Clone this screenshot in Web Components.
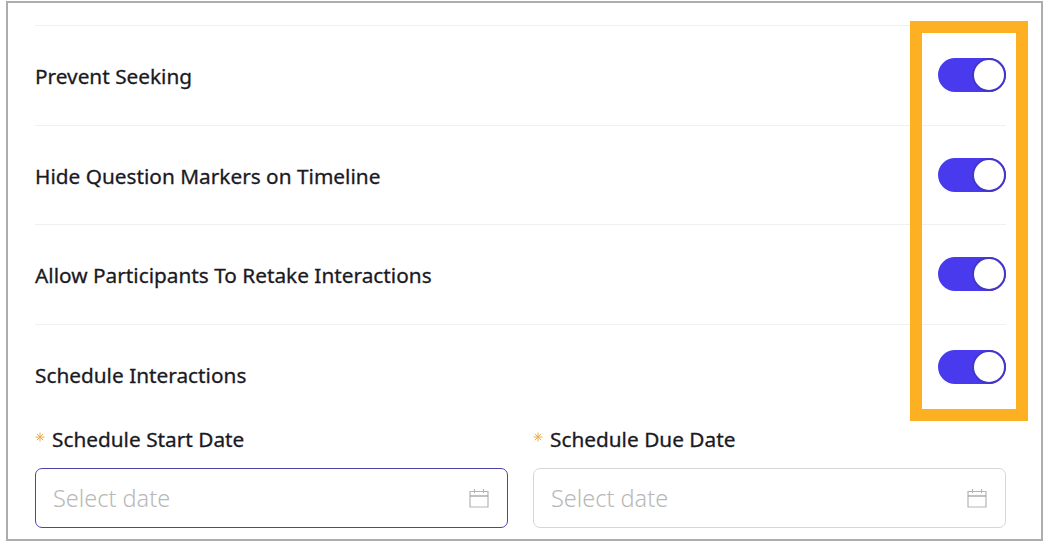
<!DOCTYPE html>
<html><head><meta charset="utf-8"><style>
html,body{margin:0;padding:0;background:#fff}
body{width:1047px;height:541px;overflow:hidden;font-family:"Noto Sans","Open Sans",sans-serif}
</style></head><body>
<settings-panel>
<setting-row label="Prevent Seeking"></setting-row>
<setting-row label="Hide Question Markers on Timeline"></setting-row>
<setting-row label="Allow Participants To Retake Interactions"></setting-row>
<setting-row label="Schedule Interactions" last></setting-row>
<date-grid>
<date-field label="Schedule Start Date" focused></date-field>
<date-field label="Schedule Due Date"></date-field>
</date-grid>
</settings-panel>
<script>
function shadow(el, html) {
  const root = el.attachShadow({ mode: 'open' });
  root.innerHTML = html;
  return root;
}
class SettingsPanel extends HTMLElement {
  constructor() {
    super();
    shadow(this, `<style>
:host{display:block;box-sizing:border-box;position:relative;margin:1px 0 0 6px;width:1037px;height:540px;border:2px solid #adadad;padding:22px 35px 0 27px;background:#fff;overflow:hidden}
.hl{position:absolute;left:902px;top:18px;width:118px;height:400px;box-sizing:border-box;border:12px solid #fdb022}
</style><slot></slot><div class="hl"></div>`);
  }
}
class ToggleSwitch extends HTMLElement {
  constructor() {
    super();
    shadow(this, `<style>
:host{display:flex;flex:none;justify-content:flex-end;align-items:center;box-sizing:border-box;width:68px;height:34px;border-radius:17px;background:#4a3aee;padding:2px}
i{display:block;width:30px;height:30px;border-radius:50%;background:#fff;box-shadow:0 0 0 2px #4436c8}
</style><i></i>`);
  }
}
class SettingRow extends HTMLElement {
  constructor() {
    super();
    const last = this.hasAttribute('last');
    shadow(this, `<style>
:host{display:flex;box-sizing:border-box;justify-content:space-between;border-top:1px solid #f0f0f0;height:${last ? 94 : 99.5}px;padding-top:${last ? 25 : 32}px;align-items:flex-start;font-size:20.8px;font-weight:450;color:#1a1a1f;-webkit-text-stroke:.3px #1a1a1f}
span{display:block;line-height:28px;margin-top:${last ? 11 : 4}px}
</style><span>${this.getAttribute('label')}</span><toggle-switch></toggle-switch>`);
  }
}
class DateGrid extends HTMLElement {
  constructor() {
    super();
    shadow(this, `<style>
:host{display:grid;grid-template-columns:473px 473px;column-gap:25px;padding-top:6px}
</style><slot></slot>`);
  }
}
class DateField extends HTMLElement {
  constructor() {
    super();
    const focused = this.hasAttribute('focused');
    shadow(this, `<style>
:host{display:block}
.lab{display:flex;align-items:center;height:30px;font-size:20.8px;font-weight:450;color:#1a1a1f;white-space:nowrap;-webkit-text-stroke:.3px #1a1a1f}
.star{flex:none;display:block;margin:0 7px 4px 0}
.box{display:flex;align-items:center;justify-content:space-between;box-sizing:border-box;height:60px;margin-top:14px;padding:0 18px 0 17px;border:1px solid ${focused ? '#4d44a8' : '#d6d6d6'};border-radius:7px;background:#fff}
.ph{font-size:23.5px;font-weight:300;color:#b8b8b8}
.cal{flex:none;display:block}
</style><div class="lab"><svg class="star" width="10" height="10" viewBox="0 0 10 10" stroke="#e9ad4c" stroke-width="1" fill="none"><path d="M5 .5v9M.5 5h9M1.8 1.8l6.4 6.4M8.2 1.8L1.8 8.2"/></svg>${this.getAttribute('label')}</div>
<div class="box"><span class="ph">Select date</span>
<svg class="cal" width="20" height="20" viewBox="0 0 20 20" fill="none" stroke="#b5b5b5" stroke-width="1.2"><path d="M1 3.5h18v15.5H1z"/><path d="M1 8h18" stroke="#a8a8a8" stroke-width="1.4"/><path d="M5.500 1v4M14.500 1v4"/><path d="M8 3.500h4" stroke-dasharray="1 1"/></svg></div>`);
  }
}
customElements.define('settings-panel', SettingsPanel);
customElements.define('toggle-switch', ToggleSwitch);
customElements.define('setting-row', SettingRow);
customElements.define('date-grid', DateGrid);
customElements.define('date-field', DateField);
</script>
</body></html>
